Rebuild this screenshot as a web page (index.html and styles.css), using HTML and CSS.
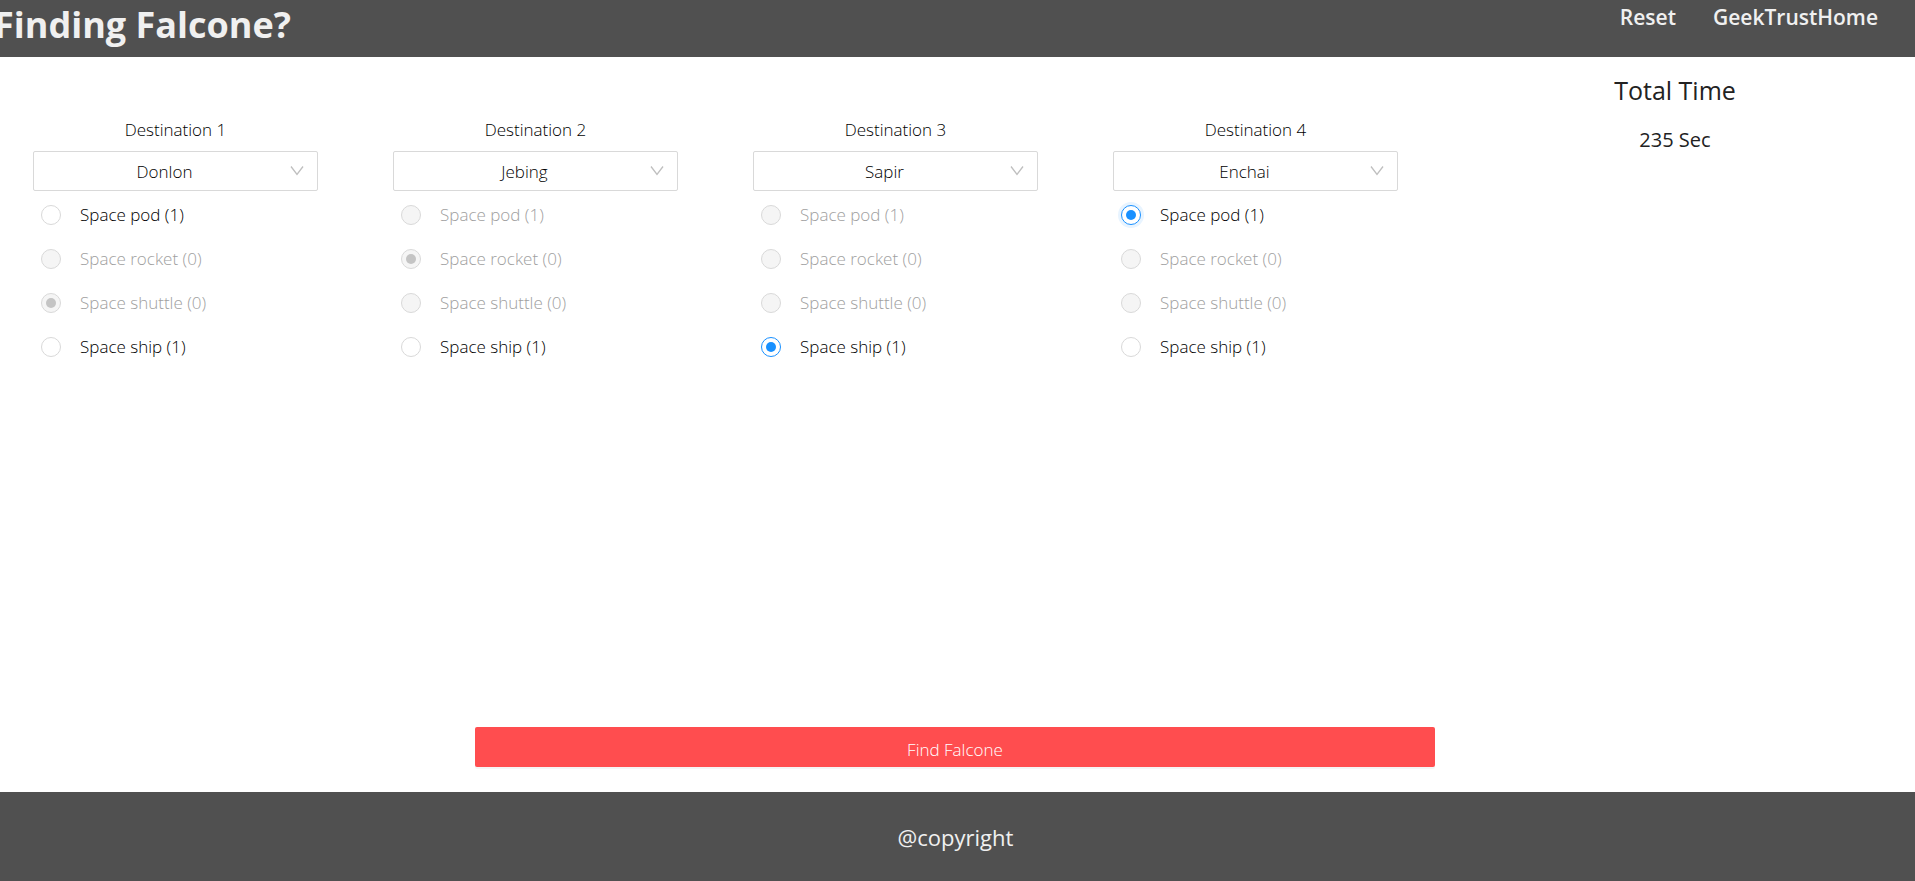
FILE: index.html
```html
<!DOCTYPE html>
<html lang="en">
<head>
<meta charset="utf-8">
<meta name="viewport" content="width=device-width, initial-scale=1">
<title>Finding Falcone?</title>
<link rel="stylesheet" href="styles.css">
</head>
<body>
<div class="page">
  <header class="header">
    <h1 class="brand">Finding Falcone?</h1>
    <nav class="nav">
      <a class="nav-link" href="#reset">Reset</a>
      <a class="nav-link" href="#home">GeekTrustHome</a>
    </nav>
  </header>

  <main class="main">
    <div class="board">
      <div class="destinations">
        <section class="destination">
          <label class="destination-label" for="planet1">Destination 1</label>
          <div class="select-box">
            <select class="select" id="planet1"><option>Donlon</option></select>
            <svg class="chevron" viewBox="0 0 14 14" aria-hidden="true"><path d="M1 2.5 L7 10.5 L13 2.5"/></svg>
          </div>
          <div class="vehicles">
            <label class="vehicle"><input class="radio" type="radio" name="v1">Space pod (1)</label>
            <label class="vehicle disabled"><input class="radio" type="radio" name="v1" disabled>Space rocket (0)</label>
            <label class="vehicle disabled"><input class="radio" type="radio" name="v1" disabled checked>Space shuttle (0)</label>
            <label class="vehicle"><input class="radio" type="radio" name="v1">Space ship (1)</label>
          </div>
        </section>
        <section class="destination">
          <label class="destination-label" for="planet2">Destination 2</label>
          <div class="select-box">
            <select class="select" id="planet2"><option>Jebing</option></select>
            <svg class="chevron" viewBox="0 0 14 14" aria-hidden="true"><path d="M1 2.5 L7 10.5 L13 2.5"/></svg>
          </div>
          <div class="vehicles">
            <label class="vehicle disabled"><input class="radio" type="radio" name="v2" disabled>Space pod (1)</label>
            <label class="vehicle disabled"><input class="radio" type="radio" name="v2" disabled checked>Space rocket (0)</label>
            <label class="vehicle disabled"><input class="radio" type="radio" name="v2" disabled>Space shuttle (0)</label>
            <label class="vehicle"><input class="radio" type="radio" name="v2">Space ship (1)</label>
          </div>
        </section>
        <section class="destination">
          <label class="destination-label" for="planet3">Destination 3</label>
          <div class="select-box">
            <select class="select" id="planet3"><option>Sapir</option></select>
            <svg class="chevron" viewBox="0 0 14 14" aria-hidden="true"><path d="M1 2.5 L7 10.5 L13 2.5"/></svg>
          </div>
          <div class="vehicles">
            <label class="vehicle disabled"><input class="radio" type="radio" name="v3" disabled>Space pod (1)</label>
            <label class="vehicle disabled"><input class="radio" type="radio" name="v3" disabled>Space rocket (0)</label>
            <label class="vehicle disabled"><input class="radio" type="radio" name="v3" disabled>Space shuttle (0)</label>
            <label class="vehicle"><input class="radio" type="radio" name="v3" checked>Space ship (1)</label>
          </div>
        </section>
        <section class="destination">
          <label class="destination-label" for="planet4">Destination 4</label>
          <div class="select-box">
            <select class="select" id="planet4"><option>Enchai</option></select>
            <svg class="chevron" viewBox="0 0 14 14" aria-hidden="true"><path d="M1 2.5 L7 10.5 L13 2.5"/></svg>
          </div>
          <div class="vehicles">
            <label class="vehicle"><input class="radio active" type="radio" name="v4" checked>Space pod (1)</label>
            <label class="vehicle disabled"><input class="radio" type="radio" name="v4" disabled>Space rocket (0)</label>
            <label class="vehicle disabled"><input class="radio" type="radio" name="v4" disabled>Space shuttle (0)</label>
            <label class="vehicle"><input class="radio" type="radio" name="v4">Space ship (1)</label>
          </div>
        </section>
      </div>
      <aside class="total">
        <h2 class="total-title">Total Time</h2>
        <p class="total-value">235 Sec</p>
      </aside>
    </div>
    <button class="submit" type="button">Find Falcone</button>
  </main>

  <footer class="footer">@copyright</footer>
</div>
</body>
</html>
```
FILE: styles.css
```css
* {
  box-sizing: border-box;
}

body {
  margin: 0;
  background: #fff;
  color: #000;
  font-family: "Open Sans", "Noto Sans", sans-serif;
  font-size: 17px;
  font-weight: 300;
  line-height: 24px;
}

.page {
  display: flex;
  flex-direction: column;
  min-height: 100vh;
  overflow: hidden;
}

.header {
  display: flex;
  justify-content: space-between;
  align-items: flex-start;
  padding: 0 37px 7px 0;
  background: #505050;
}

.brand {
  margin: 0 0 0 -6px;
  color: #f0f0f0;
  font-size: 36px;
  font-weight: 700;
  line-height: 50px;
}

.nav {
  display: flex;
  gap: 37px;
  padding-top: 3px;
}

.nav-link {
  color: #f0f0f0;
  font-size: 21px;
  font-weight: 600;
  line-height: 28px;
  text-decoration: none;
}

.main {
  display: flex;
  flex: 1;
  flex-direction: column;
  justify-content: space-between;
  margin-right: -5px;
  padding-bottom: 25px;
}

.board {
  display: grid;
  grid-template-columns: 3fr 1fr;
}

.destinations {
  display: grid;
  grid-template-columns: repeat(4, 1fr);
  padding-top: 61px;
}

.destination {
  padding: 0 42px 0 33px;
}

.destination-label {
  display: block;
  margin-bottom: 9px;
  text-align: center;
}

.select-box {
  position: relative;
}

.select {
  display: block;
  width: 100%;
  height: 40px;
  padding: 1px 34px 0 12px;
  border: 1px solid #d9d9d9;
  border-radius: 2px;
  background: #fff;
  color: #000;
  font: inherit;
  text-align-last: center;
  appearance: none;
}

.chevron {
  position: absolute;
  top: 13px;
  right: 14px;
  width: 14px;
  height: 14px;
  fill: none;
  stroke: #bfbfbf;
  stroke-width: 1.3;
  pointer-events: none;
}

.vehicles {
  display: flex;
  flex-direction: column;
  gap: 20px;
  padding: 12px 8px 0;
}

.vehicle {
  display: flex;
  align-items: center;
  gap: 19px;
}

.vehicle.disabled {
  color: #a0a0a0;
}

.radio {
  display: grid;
  place-items: center;
  width: 20px;
  height: 20px;
  margin: 0;
  border: 1px solid #d9d9d9;
  border-radius: 50%;
  background: #fff;
  appearance: none;
}

.radio:disabled {
  background: #f5f5f5;
}

.radio:checked::before {
  width: 10px;
  height: 10px;
  border-radius: 50%;
  background: #1890ff;
  content: "";
}

.radio:checked {
  border-color: #1890ff;
}

.radio:checked:disabled {
  border-color: #d9d9d9;
}

.radio:checked:disabled::before {
  background: #c4c4c4;
}

.radio.active {
  box-shadow: 0 0 0 3px #e8f4ff;
}

.total {
  padding: 17px 10px 0 0;
  color: #222;
  text-align: center;
}

.total-title {
  margin: 0 0 20px;
  font-size: 25px;
  font-weight: 500;
  line-height: 32px;
}

.total-value {
  margin: 0;
  font-size: 20px;
  font-weight: 500;
  line-height: 28px;
}

.submit {
  align-self: center;
  width: 50%;
  height: 40px;
  margin-right: 10px;
  padding: 5px 16px 0;
  border: 0;
  border-radius: 2px;
  background: #ff4d4f;
  box-shadow: 0 2px 0 rgba(0, 0, 0, 0.04);
  color: #fff;
  font: inherit;
}

.footer {
  padding: 29px 4px 27px 0;
  background: #505050;
  color: #f0f0f0;
  font-size: 22px;
  font-weight: 400;
  line-height: 33px;
  text-align: center;
}
```
